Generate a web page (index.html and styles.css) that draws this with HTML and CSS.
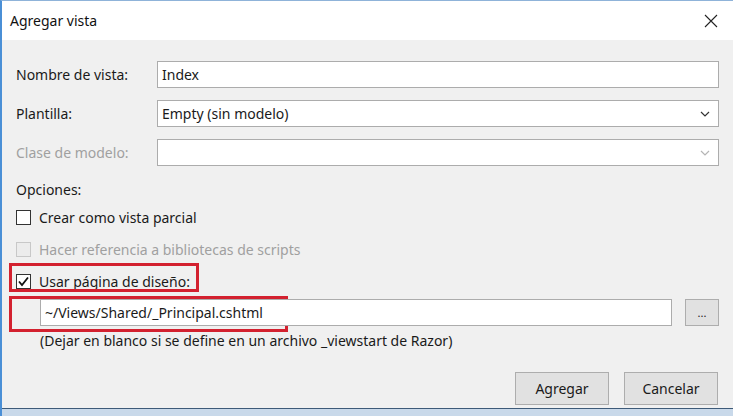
FILE: index.html
```html
<!DOCTYPE html>
<html lang="es">
<head>
    <meta charset="UTF-8">
    <title>Agregar vista</title>
    <link rel="stylesheet" href="styles.css">
</head>
<body>
    <div class="window">
        <div class="titlebar">
            <span class="title">Agregar vista</span>
            <svg class="close" width="14" height="14" viewBox="0 0 14 14">
                <path d="M1 1 L13 13 M13 1 L1 13" stroke="#222" stroke-width="1.1" fill="none"/>
            </svg>
        </div>
        <div class="content">
            <div class="field">
                <label class="label">Nombre de vista:</label>
                <div class="input">Index</div>
            </div>
            <div class="field">
                <label class="label">Plantilla:</label>
                <div class="input select">Empty (sin modelo)
                    <svg class="chev" width="10" height="6" viewBox="0 0 10 6"><path d="M1 1 L5 5 L9 1" stroke="#333" stroke-width="1.2" fill="none"/></svg>
                </div>
            </div>
            <div class="field">
                <label class="label disabled">Clase de modelo:</label>
                <div class="input select">
                    <svg class="chev" width="10" height="6" viewBox="0 0 10 6"><path d="M1 1 L5 5 L9 1" stroke="#b5b5b5" stroke-width="1.2" fill="none"/></svg>
                </div>
            </div>

            <p class="section">Opciones:</p>

            <div class="check first">
                <span class="box"></span>
                <span>Crear como vista parcial</span>
            </div>
            <div class="check disabled">
                <span class="box box-off"></span>
                <span>Hacer referencia a bibliotecas de scripts</span>
            </div>
            <div class="check checked">
                <div class="mark mark-1"></div>
                <span class="box">
                    <svg width="13" height="13" viewBox="0 0 13 13"><path d="M2 6.5 L5 10 L11 2.5" stroke="#111" stroke-width="1.8" fill="none"/></svg>
                </span>
                <span>Usar página de diseño:</span>
            </div>

            <div class="layout-row">
                <div class="mark mark-2"></div>
                <div class="input path">~/Views/Shared/_Principal.cshtml</div>
                <button class="btn small">...</button>
            </div>
            <p class="hint">(Dejar en blanco si se define en un archivo _viewstart de Razor)</p>

            <div class="actions">
                <button class="btn">Agregar</button>
                <button class="btn">Cancelar</button>
            </div>
        </div>
        <div class="taskbar"></div>
    </div>
</body>
</html>
```

FILE: styles.css
```css
body {
    margin: 0;
    font-family: "Noto Sans", "Open Sans", sans-serif;
    font-size: 14px;
    color: #1a1a1a;
    background-color: #f0f0f0;
}

.window {
    width: 733px;
    height: 416px;
    box-sizing: border-box;
    border-top: 1px solid #8fb3d9;
    border-left: 2px solid #4a8fd6;
    display: flex;
    flex-direction: column;
    overflow: hidden;
}

.titlebar {
    height: 39px;
    flex: none;
    background-color: #ffffff;
    display: flex;
    align-items: center;
    justify-content: space-between;
    padding: 0 15px 0 8px;
}

.title {
    font-size: 14px;
    color: #111;
}

.content {
    flex: 1;
    background-color: #f0f0f0;
    padding: 21px 14px 0 14px;
    position: relative;
}

.field {
    display: flex;
    align-items: center;
    height: 27px;
    margin-bottom: 12px;
}

.label {
    width: 141px;
    flex: none;
}

.disabled {
    color: #a0a0a0;
}

.input {
    flex: 1;
    height: 27px;
    box-sizing: border-box;
    border: 1px solid #acacac;
    background-color: #ffffff;
    display: flex;
    align-items: center;
    padding: 0 4px;
    position: relative;
}

.select .chev {
    position: absolute;
    right: 8px;
    top: 10px;
}

.section {
    margin: 10px 0 0 0;
    height: 24px;
    line-height: 24px;
}

.check {
    display: flex;
    align-items: center;
    height: 20px;
    margin-top: 12px;
    position: relative;
}

.check.first {
    margin-top: 5px;
}

.box {
    width: 15px;
    height: 15px;
    box-sizing: border-box;
    border: 1px solid #333;
    background-color: #ffffff;
    margin-right: 8px;
    display: flex;
    align-items: center;
    justify-content: center;
}

.box-off {
    border-color: #c8c8c8;
    background-color: #ececec;
}

.mark {
    position: absolute;
    border: 3px solid #d3212f;
    box-sizing: border-box;
}

.mark-1 {
    left: -7px;
    top: -8px;
    width: 190px;
    height: 29px;
}

.layout-row {
    display: flex;
    align-items: center;
    margin-top: 7px;
    padding-left: 24px;
    position: relative;
    height: 28px;
}

.mark-2 {
    left: -7px;
    top: -2px;
    width: 279px;
    height: 36px;
}

.path {
    height: 27px;
    padding-left: 4px;
}

.btn {
    font-family: "Noto Sans", "Open Sans", sans-serif;
    font-size: 14px;
    color: #1a1a1a;
    background-color: #e1e1e1;
    border: 1px solid #adadad;
    width: 94px;
    height: 33px;
    padding: 0;
}

.small {
    width: 34px;
    height: 27px;
    margin-left: 13px;
    font-size: 11px;
}

.hint {
    margin: 5px 0 0 24px;
    height: 20px;
    line-height: 20px;
}

.actions {
    display: flex;
    justify-content: flex-end;
    gap: 15px;
    margin-top: 21px;
    padding-right: 1px;
}

.taskbar {
    height: 7px;
    flex: none;
    border-top: 1px solid #3d5a78;
    background-color: #c9d9ea;
}
```
